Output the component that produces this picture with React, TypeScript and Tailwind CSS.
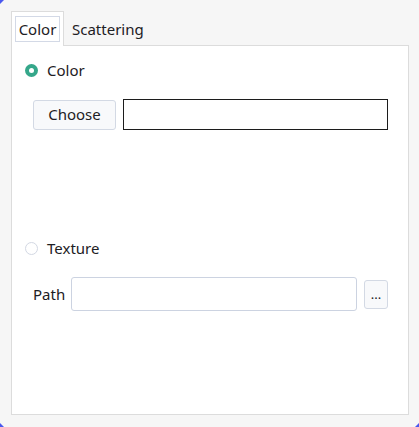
import React from "react";

function Radio({ checked }: { checked: boolean }) {
  if (checked) {
    return (
      <div className="w-[13px] h-[13px] rounded-full bg-[#35a78a] flex items-center justify-center">
        <div className="w-[5px] h-[5px] rounded-full bg-white" />
      </div>
    );
  }
  return <div className="w-[13px] h-[13px] rounded-full bg-white border border-[#d3d8e3]" />;
}

export default function App() {
  return (
    <div
      className="relative w-[419px] h-[427px] bg-[#f6f6f6] pt-[11px] pl-[11px] pr-[10px] pb-[12px] flex flex-col text-[15px] text-[#1d2024]"
      style={{ fontFamily: '"Noto Sans", "Open Sans", sans-serif' }}
    >
      {/* window corner artifacts */}
      <svg className="absolute left-0 top-0" width="4" height="4" viewBox="0 0 4 4">
        <polygon points="0,0 4,0 0,4" fill="#4a58ee" />
      </svg>
      <svg className="absolute left-0 bottom-0" width="4" height="4" viewBox="0 0 4 4">
        <polygon points="0,0 0,4 4,4" fill="#4a58ee" />
      </svg>
      <svg className="absolute right-0 bottom-0" width="4" height="4" viewBox="0 0 4 4">
        <polygon points="4,0 4,4 0,4" fill="#4a58ee" />
      </svg>

      {/* tab bar */}
      <div className="flex h-[35px] shrink-0">
        <div className="w-[53px] h-[35px] bg-white border-l border-t border-r border-[#dcdcdc] pl-[3px] pr-[3px] pt-[4px]">
          <div className="h-[26px] border border-[#d3d9e6] flex items-center justify-center leading-none">
            Color
          </div>
        </div>
        <div className="flex-1 h-[35px] border-b border-[#dcdcdc] flex items-start pt-[10px] pl-[8px] leading-none">
          <span className="leading-[20px] -mt-[2px]">Scattering</span>
        </div>
      </div>

      {/* pane */}
      <div className="flex-1 bg-white border-l border-r border-b border-[#dcdcdc] flex flex-col pl-[13px] pr-[20px]">
        <div className="mt-[14px] h-[20px] flex items-center gap-[9px]">
          <Radio checked />
          <span>Color</span>
        </div>
        <div className="mt-[19px] pl-[8px] flex items-center gap-[7px]">
          <div className="w-[83px] h-[30px] bg-[#f8f9fb] border border-[#d3d9e4] rounded-[3px] flex items-center justify-center">
            Choose
          </div>
          <div className="flex-1 h-[31px] bg-white border border-[#1c1c1c]" />
        </div>
        <div className="mt-[108px] h-[20px] flex items-center gap-[9px]">
          <Radio checked={false} />
          <span>Texture</span>
        </div>
        <div className="mt-[19px] pl-[8px] flex items-center">
          <span className="w-[38px]">Path</span>
          <div className="w-[287px] h-[34px] bg-white border border-[#ccd3e1] rounded-[3px]" />
          <div className="ml-[7px] w-[24px] h-[29px] bg-[#f8f9fb] border border-[#d3d9e4] rounded-[3px] flex items-center justify-center text-[13px] leading-none">
            ...
          </div>
        </div>
      </div>
    </div>
  );
}
